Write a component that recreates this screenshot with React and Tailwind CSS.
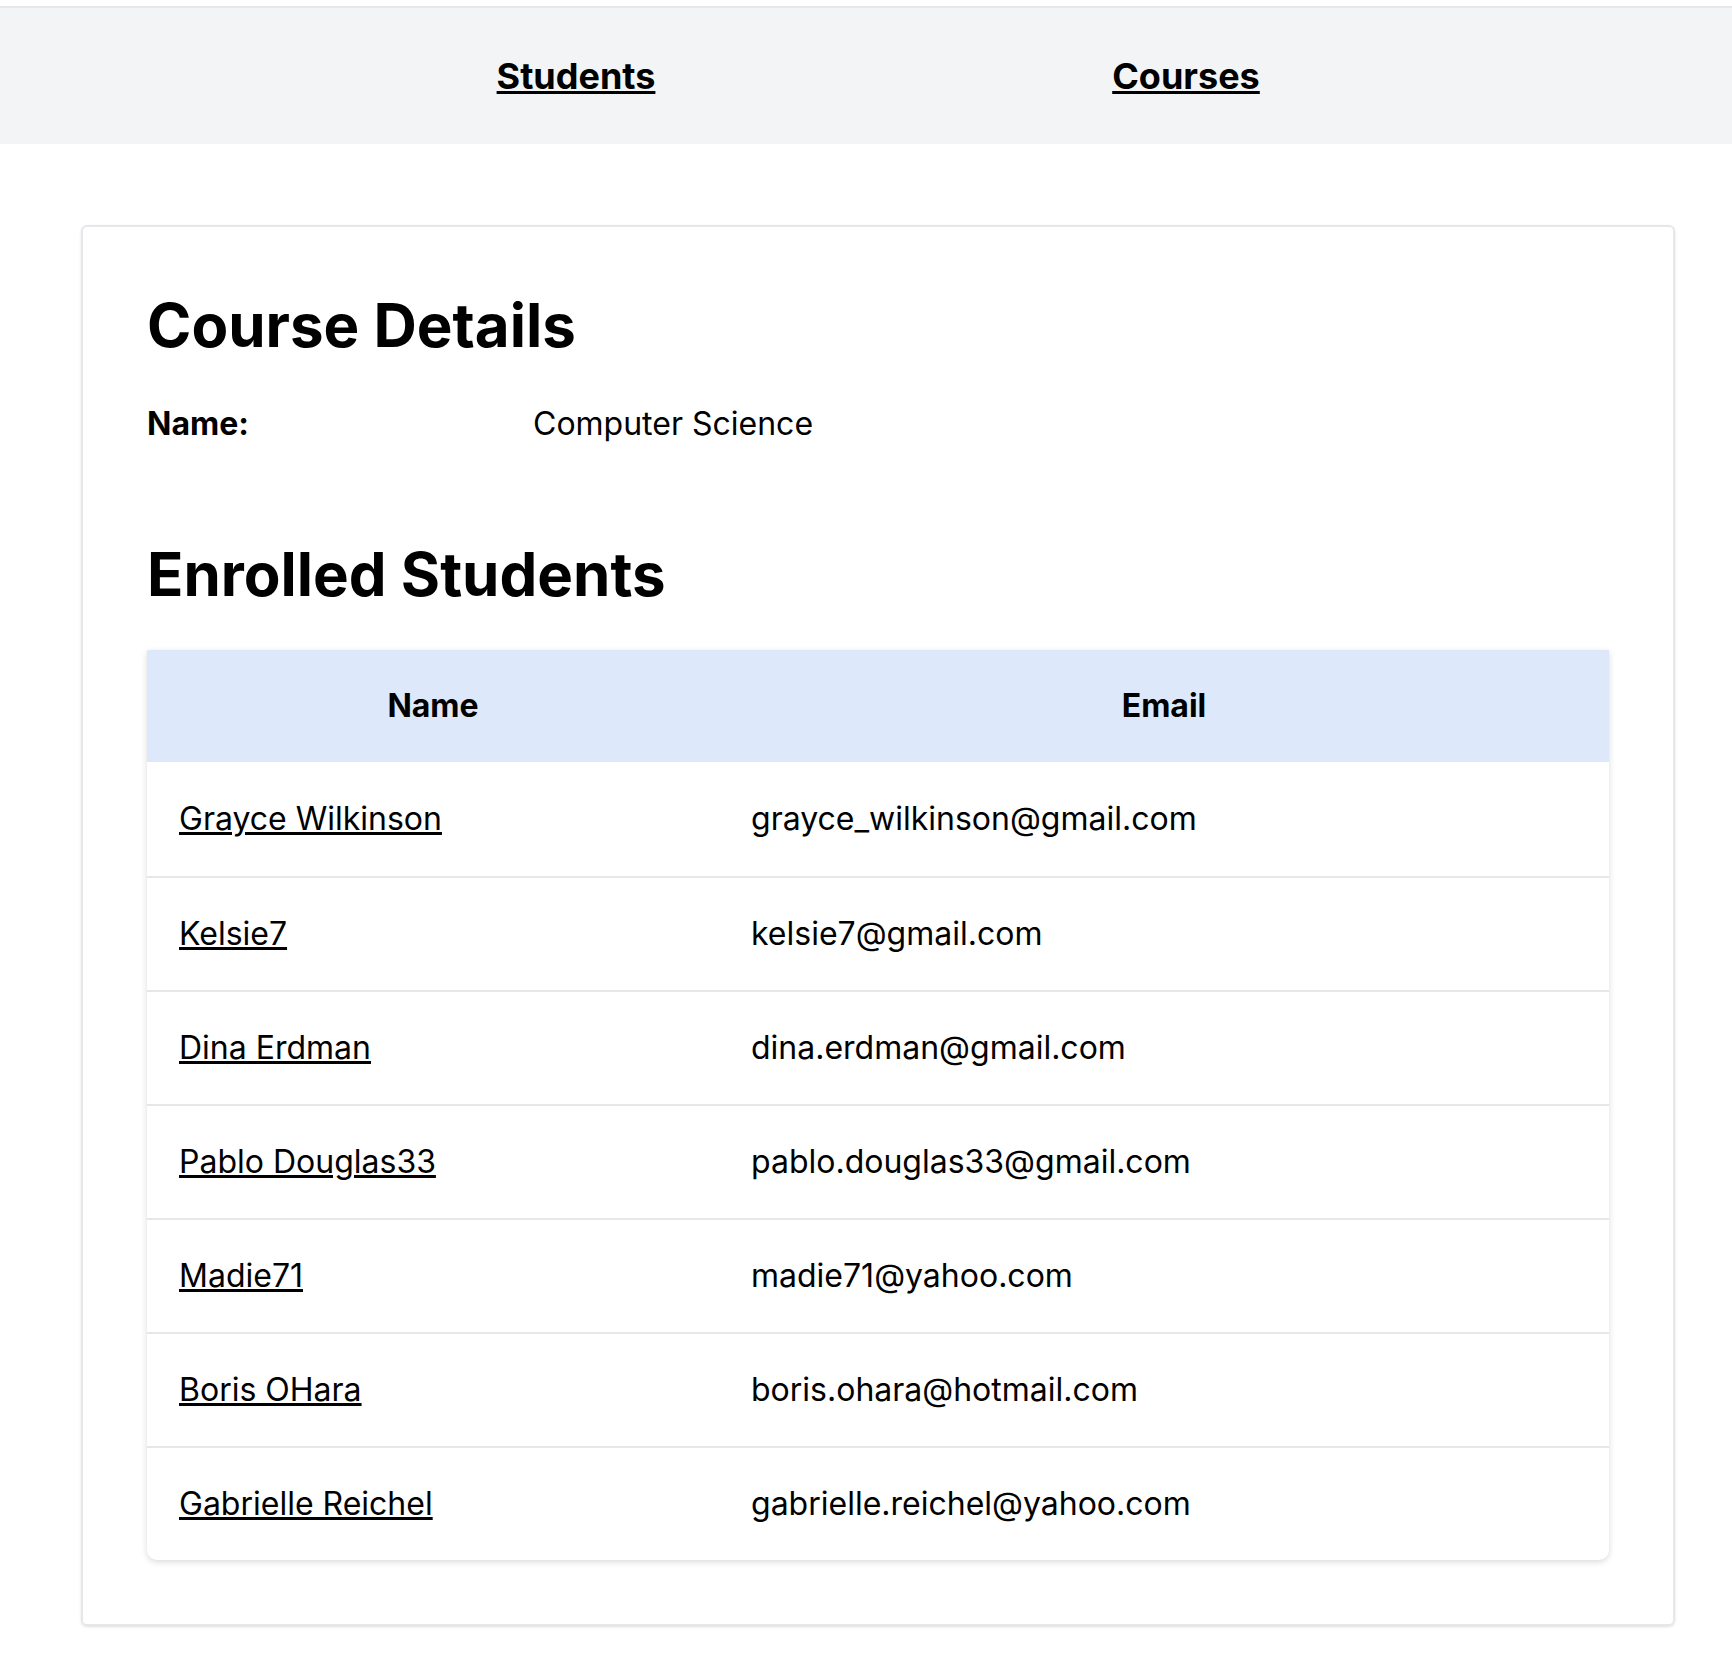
export default function App() {
  const rows = [
    ["Grayce Wilkinson", "grayce_wilkinson@gmail.com"],
    ["Kelsie7", "kelsie7@gmail.com"],
    ["Dina Erdman", "dina.erdman@gmail.com"],
    ["Pablo Douglas33", "pablo.douglas33@gmail.com"],
    ["Madie71", "madie71@yahoo.com"],
    ["Boris OHara", "boris.ohara@hotmail.com"],
    ["Gabrielle Reichel", "gabrielle.reichel@yahoo.com"],
  ];
  return (
    <div className="min-h-[1664px] bg-white text-black" style={{ fontFamily: "Inter, 'Liberation Sans', sans-serif" }}>
      <div className="h-[6px] bg-white" />
      <nav className="flex h-[138px] items-center justify-center border-t-2 border-[#e5e7eb] bg-[#f3f4f6] pl-[30px]">
        <div className="flex w-[610px] justify-center"><a className="text-[36px] font-bold underline">Students</a></div>
        <div className="flex w-[610px] justify-center"><a className="text-[36px] font-bold underline">Courses</a></div>
      </nav>
      <div className="px-[81px] pt-[81px]">
        <div className="w-[1594px] rounded-[6px] border-2 border-[#e5e7eb] px-[64px] pb-[64px] pt-[62px] shadow-sm">
          <h1 className="text-[60px] font-bold leading-[72px]">Course Details</h1>
          <div className="mt-[39px] flex text-[32px] leading-[48px]">
            <span className="w-[386px] font-bold">Name:</span>
            <span>Computer Science</span>
          </div>
          <h2 className="mt-[90px] text-[60px] font-bold leading-[72px]">Enrolled Students</h2>
          <div className="mt-[40px] overflow-hidden rounded-b-[10px] shadow-[0_2px_6px_rgba(0,0,0,0.15)]">
            <div className="flex h-[112px] items-center bg-[#dde8fa] text-[32px] font-bold">
              <div className="w-[572px] text-center">Name</div>
              <div className="flex-1 text-center">Email</div>
            </div>
            {rows.map(([n, e], i) => (
              <div key={n} className={`flex h-[114px] items-center text-[32px] ${i > 0 ? "border-t-2 border-[#e5e7eb]" : ""}`}>
                <div className="w-[572px] pl-[32px]"><a className="underline">{n}</a></div>
                <div className="flex-1 pl-[32px]">{e}</div>
              </div>
            ))}
          </div>
        </div>
      </div>
    </div>
  );
}
